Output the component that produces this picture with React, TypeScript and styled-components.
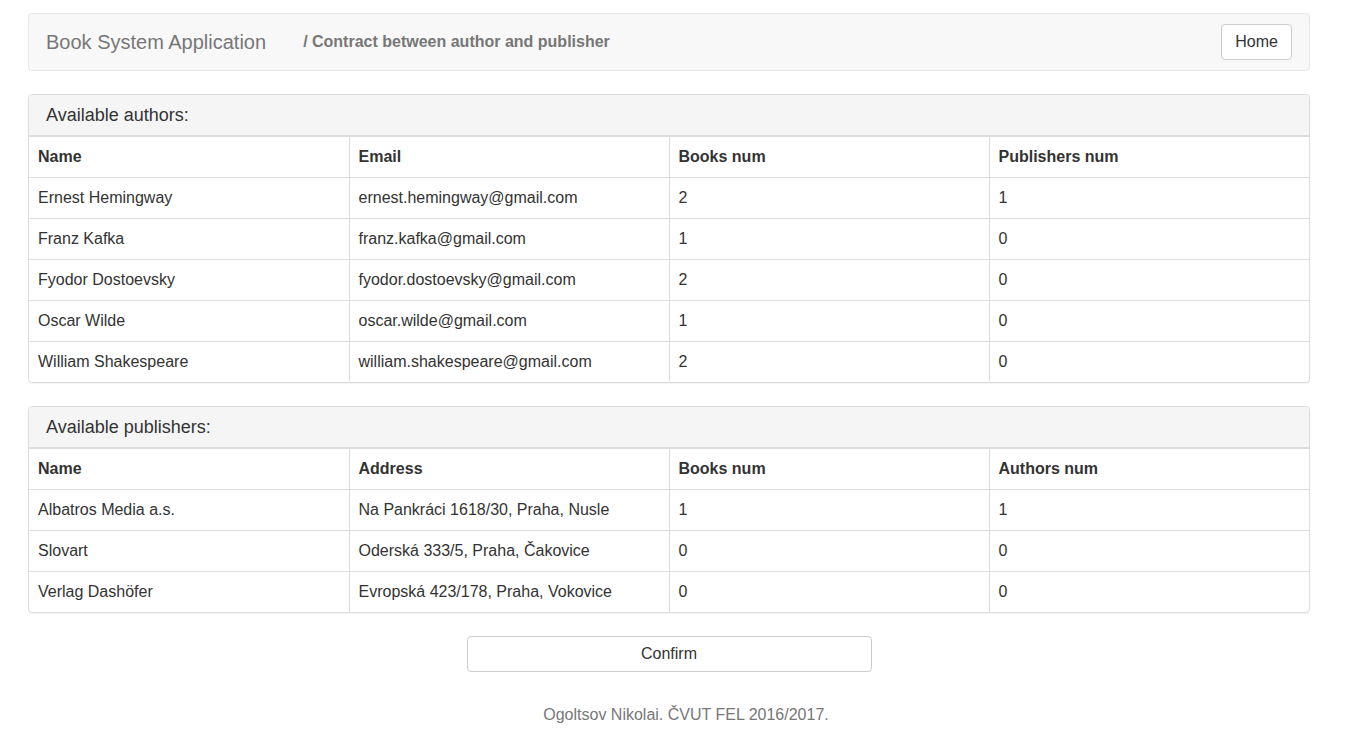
import React from "react";
import styled, { createGlobalStyle } from "styled-components";

const GlobalStyle = createGlobalStyle`
  html, body { margin: 0; padding: 0; background: #fff; }
  body {
    font-family: "Liberation Sans", Arial, Helvetica, sans-serif;
    font-size: 16px;
    color: #333;
  }
  * { box-sizing: border-box; }
`;

const Page = styled.div`
  padding: 13px 38px 0 28px;
  display: flex;
  flex-direction: column;
`;

const Navbar = styled.nav`
  height: 58px;
  background: #f8f8f8;
  border: 1px solid #e7e7e7;
  border-radius: 4px;
  display: flex;
  align-items: center;
  padding: 0 17px 0 17px;
  margin-bottom: 23px;
`;

const Brand = styled.span`
  font-size: 20px;
  color: #777;
  line-height: 24px;
`;

const Crumb = styled.span`
  font-size: 16px;
  font-weight: bold;
  color: #777;
  margin-left: 37px;
  flex: 1;
`;

const Button = styled.button<{ $wide?: boolean }>`
  height: 36px;
  font-family: inherit;
  font-size: 16px;
  color: #333;
  background: #fff;
  border: 1px solid #ccc;
  border-radius: 4px;
  padding: 0 13px;
  cursor: pointer;
  width: ${(p) => (p.$wide ? "405px" : "auto")};
  align-self: ${(p) => (p.$wide ? "center" : "auto")};
`;

const Panel = styled.section`
  border: 1px solid #ddd;
  border-radius: 4px;
  margin-bottom: 23px;
  overflow: hidden;
  box-shadow: 0 1px 1px rgba(0, 0, 0, 0.05);
`;

const PanelHeading = styled.div`
  background: #f5f5f5;
  border-bottom: 1px solid #ddd;
  padding: 10px 17px;
  font-size: 18px;
  line-height: 20px;
  color: #333;
`;

const Table = styled.table`
  width: 100%;
  border-collapse: collapse;
  table-layout: fixed;
`;

const Cell = styled.td<{ $head?: boolean }>`
  padding: 8px 9px;
  line-height: 24px;
  font-size: 16px;
  font-weight: ${(p) => (p.$head ? "bold" : "normal")};
  color: #333;
  border-left: 1px solid #ddd;
  border-top: 1px solid #ddd;
  text-align: left;
  white-space: nowrap;
  overflow: hidden;
  &:first-child { border-left: none; }
`;

const Row = styled.tr`
  &:first-child > td { border-top: none; }
`;

const Footer = styled.footer`
  text-align: center;
  color: #777;
  font-size: 16px;
  line-height: 22px;
  margin-top: 32px;
  padding-left: 34px;
`;

type DataTableProps = { title: string; head: string[]; rows: string[][] };

const DataTable = ({ title, head, rows }: DataTableProps) => (
  <Panel>
    <PanelHeading>{title}</PanelHeading>
    <Table>
      <tbody>
        <Row>
          {head.map((h) => (
            <Cell as="th" $head key={h}>
              {h}
            </Cell>
          ))}
        </Row>
        {rows.map((r, i) => (
          <Row key={i}>
            {r.map((c, j) => (
              <Cell key={j}>{c}</Cell>
            ))}
          </Row>
        ))}
      </tbody>
    </Table>
  </Panel>
);

const authors = [
  ["Ernest Hemingway", "ernest.hemingway@gmail.com", "2", "1"],
  ["Franz Kafka", "franz.kafka@gmail.com", "1", "0"],
  ["Fyodor Dostoevsky", "fyodor.dostoevsky@gmail.com", "2", "0"],
  ["Oscar Wilde", "oscar.wilde@gmail.com", "1", "0"],
  ["William Shakespeare", "william.shakespeare@gmail.com", "2", "0"],
];

const publishers = [
  ["Albatros Media a.s.", "Na Pankráci 1618/30, Praha, Nusle", "1", "1"],
  ["Slovart", "Oderská 333/5, Praha, Čakovice", "0", "0"],
  ["Verlag Dashöfer", "Evropská 423/178, Praha, Vokovice", "0", "0"],
];

export default function App() {
  return (
    <>
      <GlobalStyle />
      <Page>
        <Navbar>
          <Brand>Book System Application</Brand>
          <Crumb>/ Contract between author and publisher</Crumb>
          <Button>Home</Button>
        </Navbar>
        <DataTable
          title="Available authors:"
          head={["Name", "Email", "Books num", "Publishers num"]}
          rows={authors}
        />
        <DataTable
          title="Available publishers:"
          head={["Name", "Address", "Books num", "Authors num"]}
          rows={publishers}
        />
        <Button $wide>Confirm</Button>
        <Footer>Ogoltsov Nikolai. ČVUT FEL 2016/2017.</Footer>
      </Page>
    </>
  );
}
